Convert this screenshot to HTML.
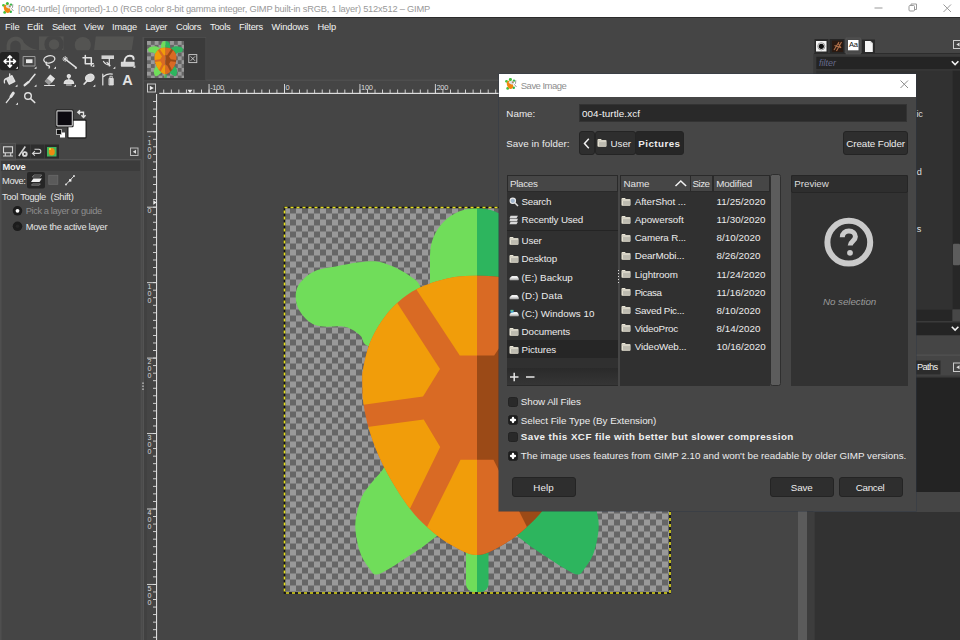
<!DOCTYPE html>
<html lang="en">
<head>
<meta charset="utf-8">
<title>GIMP - Save Image</title>
<style>
*{box-sizing:border-box;margin:0;padding:0}
html,body{width:960px;height:640px;overflow:hidden;background:#454545;}
body{position:relative;font-family:"Liberation Sans",sans-serif;font-size:11px;color:#e6e6e6;line-height:1}
.abs{position:absolute}
.t{position:absolute;white-space:nowrap;line-height:16px;height:16px}
/* title bar */
#titlebar{left:0;top:0;width:960px;height:17px;background:#fff}
#menubar{left:0;top:17px;width:960px;height:20px;background:#454545;border-top:1px solid #2b2b2b}
/* dialog */
.btn{position:absolute;background:#2e2e2e;border:1px solid #242424;border-radius:3px;color:#e8e8e8;text-align:center;white-space:nowrap}
.entry{position:absolute;background:#292929;border:1px solid #333}
.list{position:absolute;background:#303030}
.hdr{position:absolute;background:#464646;border:1px solid #2a2a2a;color:#e0e0e0}
.row{position:absolute;left:0;white-space:nowrap;height:18px;line-height:18px;color:#e6e6e6}
.chk{position:absolute;width:10px;height:10px;background:#292929;border:1px solid #232323;border-radius:2.500px}
</style>
</head>
<body>
<!-- TITLE BAR -->
<div id="titlebar" class="abs">
  <span class="t" style="left:18px;top:1px;font-size:9.3px;letter-spacing:-0.207px;color:#999;">&#91;004-turtle&#93; (imported)-1.0 (RGB color 8-bit gamma integer, GIMP built-in sRGB, 1 layer) 512x512 – GIMP</span>
  <svg class="abs" style="left:0;top:0" width="960" height="17" viewBox="0 0 960 17">
    <g transform="translate(2 2)"><g id="appicon"><circle cx="1.500" cy="3.300" r="1.400" fill="#4cc540"/><circle cx="5.400" cy="1.400" r="1.500" fill="#3dbb3a"/><circle cx="9" cy="2.600" r="1.200" fill="#3ab84a"/><circle cx="2.700" cy="10.400" r="1.400" fill="#43c23f"/><circle cx="8.700" cy="9.800" r="1.300" fill="#2fb24a"/><ellipse cx="5" cy="6.800" rx="2.900" ry="4.300" transform="rotate(-22 5 6.800)" fill="#f0860f"/><ellipse cx="6.400" cy="4.800" rx="2.700" ry="1.500" transform="rotate(15 6.400 4.800)" fill="#dfe3e8"/><circle cx="7.800" cy="4.300" r="1" fill="#a88a62"/><path d="M10.800 2.300l-.3 3.500M9.300 6.300l2.200 2.700" stroke="#9a9a9a" stroke-width="1" fill="none"/></g></g>
    <rect x="874.5" y="7.5" width="8" height="1" fill="#9a9a9a"/>
    <g fill="none" stroke="#9a9a9a" stroke-width="1"><rect x="909" y="5.5" width="5.5" height="5.5" rx="1"/><path d="M911 5.5v-1.5h5.5v5.5h-2"/></g>
    <path d="M943.5 4.5l7.5 7.5M951 4.5l-7.5 7.5" stroke="#9a9a9a" stroke-width="1" fill="none"/>
  </svg>
</div>
<!-- MENU BAR -->
<div id="menubar" class="abs">
  <span class="t" style="left:5px;top:0.5px;font-size:9.3px;letter-spacing:-0.121px;color:#f4f4f4;">File</span>
  <span class="t" style="left:27px;top:0.5px;font-size:9.3px;letter-spacing:-0.008px;color:#f4f4f4;">Edit</span>
  <span class="t" style="left:52px;top:0.5px;font-size:9.3px;letter-spacing:-0.391px;color:#f4f4f4;">Select</span>
  <span class="t" style="left:84px;top:0.5px;font-size:9.3px;letter-spacing:-0.121px;color:#f4f4f4;">View</span>
  <span class="t" style="left:112px;top:0.5px;font-size:9.3px;letter-spacing:-0.169px;color:#f4f4f4;">Image</span>
  <span class="t" style="left:145.5px;top:0.5px;font-size:9.3px;letter-spacing:-0.353px;color:#f4f4f4;">Layer</span>
  <span class="t" style="left:176px;top:0.5px;font-size:9.3px;letter-spacing:-0.312px;color:#f4f4f4;">Colors</span>
  <span class="t" style="left:210px;top:0.5px;font-size:9.3px;letter-spacing:-0.241px;color:#f4f4f4;">Tools</span>
  <span class="t" style="left:239px;top:0.5px;font-size:9.3px;letter-spacing:-0.188px;color:#f4f4f4;">Filters</span>
  <span class="t" style="left:271.5px;top:0.5px;font-size:9.3px;letter-spacing:-0.103px;color:#f4f4f4;">Windows</span>
  <span class="t" style="left:317.5px;top:0.5px;font-size:9.3px;letter-spacing:-0.156px;color:#f4f4f4;">Help</span>
</div>
<!-- TOOLBOX -->
<svg class="abs" style="left:0;top:0" width="146" height="640" viewBox="0 0 146 640">
<!-- wilber strip -->
<clipPath id="stripclip"><rect x="0" y="36.200" width="142" height="14.100"/></clipPath>
<g clip-path="url(#stripclip)">
<g fill="#545452">
<path d="M6.600 50.300V45.600A8.900 8.900 0 0 1 24 42.800C28 47 33 49.600 40 50.300H20.700V45.600A5.200 5.200 0 0 0 10.300 45.600V50.300Z"/>
<rect x="39" y="36.200" width="24.600" height="14.100"/>
<circle cx="82.800" cy="45.100" r="8.100"/>
<path d="M95.800 36.200H133.900L131.700 50.300H94Z"/>
</g>
<circle cx="54" cy="44.400" r="9.600" fill="#454545"/>
<circle cx="54" cy="44.400" r="5.200" fill="#545452"/>
</g>
<!-- selected tool bg -->
<rect x="0" y="52" width="19.200" height="18.200" rx="2.500" fill="#232323"/>
<g fill="none" stroke="#e2e2e2" stroke-width="1.300" stroke-linecap="round" stroke-linejoin="round">
<!-- move -->
<path d="M9.800 56v11M4.300 61.400h11M8 57.600l1.800-1.900 1.800 1.900M8 65.300l1.800 1.900 1.800-1.900M6 59.600l-1.900 1.800 1.900 1.800M13.600 59.600l1.900 1.800-1.900 1.800" stroke="#fff" stroke-width="1.500"/>
<!-- rect select -->
<rect x="23.500" y="56.500" width="11.500" height="9.500" stroke="#9a9a9a" stroke-width="1"/>
<rect x="26" y="59.300" width="6.500" height="3.800" fill="#e8e8e8" stroke="none"/>
<!-- lasso -->
<ellipse cx="49.300" cy="59.300" rx="5.600" ry="3.600" transform="rotate(-12 49.300 59.300)"/>
<path d="M46.500 62.300c-1 1.500 0 3 1.500 3.200s2 1.300 1 2.500"/>
<!-- wand -->
<path d="M66.500 60.200l9 7" stroke-width="1.500"/>
<path d="M65.200 56.500v5M62.800 59h4.800M63.500 57.300l3.400 3.400M66.900 57.300l-3.400 3.400" stroke-width="0.900"/>
<!-- crop -->
<path d="M85.300 55.500v8.300h8M83 57.800h8.300v8" stroke-width="1.500"/>
<!-- transform -->
<path d="M101.500 57.200h12.500" stroke-width="3.600" stroke-linecap="butt" stroke="#d2d2d2"/>
<path d="M109.300 58v8M103.500 61.500c2 3 4 3.500 5.800 3.500M107 62.500l3 3" stroke-width="1.200"/>
<!-- warp -->
<path d="M121.500 66v-3.500h12.500v3.500z" fill="#d8d8d8" stroke="#d8d8d8"/>
<path d="M124.500 62c0-4 2.500-6.300 5.300-6.300 2.400 0 3.800 1.500 3.800 3.200" stroke-width="2"/>
<!-- bucket -->
<path d="M6.500 78.500l5.500-2.800 2.800 5.700-5.500 2.800z" fill="#d8d8d8"/>
<path d="M9.700 73.800v5.500M6.500 78.500c-2 .5-2.500 2-2 4.300" />
<!-- brush -->
<path d="M35 74.300l-6.500 8" stroke-width="1.500"/><path d="M28.300 82.200l-3.600 3" stroke-width="2.400"/>
<!-- eraser -->
<path d="M50.300 75.300l4 3.400-2.800 3.400-4-3.400z" fill="#e0e0e0"/><path d="M47.200 79.200l3.600 3-1.800 2-3.600-3z" fill="#9a9a9a" stroke="#9a9a9a"/><path d="M44.500 85.500h10" stroke-width="1"/>
<!-- stamp -->
<path d="M68.800 77.600a1.500 1.500 0 1 1 .1 0v2.500M64.200 83.300c.3-2.600 2.500-3.300 4.700-3.300s4.400.7 4.700 3.300z" fill="#d8d8d8"/><path d="M66.500 85h4.800" stroke-width="1"/>
<!-- smudge -->
<ellipse cx="89.800" cy="77.800" rx="4.300" ry="3.500" fill="#d8d8d8" transform="rotate(-20 89.800 77.800)"/><path d="M88 80l-3.800 4" stroke-width="1.800"/>
<!-- paths -->
<path d="M102.800 85v-11M102.800 77c4-3.500 7-3.500 9.500-2.800" stroke-width="1.200"/><rect x="109.300" y="78.500" width="4" height="6.500" fill="#d8d8d8" stroke-width="0.800"/><path d="M110.300 76.300h2v2h-2z" stroke-width="0.800"/>
<!-- picker -->
<path d="M6.300 102.600l5-6.500" stroke-width="1.300"/><path d="M11 96.500l2.300-3.300" stroke-width="3"/>
<!-- zoom -->
<circle cx="28" cy="96" r="3.300" stroke-width="1.400"/><path d="M30.500 98.500l4.200 4" stroke-width="1.700"/>
</g>
<!-- text tool A drawn as real text -->
<text x="127.600" y="85.200" text-anchor="middle" font-family="Liberation Sans, sans-serif" font-size="14.500" font-weight="bold" fill="#e2e2e2">A</text>
<!-- group corner marks -->
<g fill="#eee"><path d="M18 66.500v2.300h-2.300zM36.500 66.500v2.300h-2.300zM56 66.500v2.300h-2.300zM76.800 66.500v2.300h-2.300zM94.300 64.500v2.300h-2.300zM115.300 66.500v2.300h-2.300zM135.300 65.500v2.300h-2.300zM17.500 84.500v2.300h-2.300zM36.500 84.500v2.300h-2.300zM76 84.500v2.300h-2.300zM95.300 84.500v2.300h-2.300zM18 102.500v2.300h-2.300z"/></g>
<!-- fg/bg -->
<rect x="67.800" y="120" width="18.400" height="18" rx="1.200" fill="#fff" stroke="#232323" stroke-width="1.400"/>
<rect x="55.600" y="109.600" width="18" height="17.600" rx="1.300" fill="#1a1a1a"/><rect x="56.900" y="110.900" width="15.400" height="15" rx="0.800" fill="#0c0a10" stroke="#cfcfcf" stroke-width="1.100"/>
<path d="M78 112.300h5.500v5M80 110.300l-2.200 2 2.200 2M81.400 115.300l2.100 2.200 2.100-2.200" fill="none" stroke="#e2e2e2" stroke-width="1.400"/>
<rect x="60" y="132.500" width="5" height="5" fill="#fff"/><rect x="56.500" y="129.500" width="5" height="5" fill="#111" stroke="#ccc" stroke-width="0.800"/>
<!-- tabs -->
<rect x="0.800" y="143.300" width="14.700" height="17" fill="#484848" stroke="#585858" stroke-width="0.800"/><rect x="0.400" y="159" width="0.900" height="481" fill="#565656"/>
<rect x="16" y="144.500" width="14" height="14" fill="#2e2e2e"/><rect x="30.500" y="144.500" width="13.500" height="14" fill="#2e2e2e"/><rect x="44.500" y="144.500" width="14.500" height="14" fill="#2a2a2a"/>
<g fill="none" stroke="#d4d4d4" stroke-width="1.100">
<rect x="3.500" y="146.800" width="9" height="6"/><path d="M5.300 153v2.500M10.700 153v2.500M3 156h10"/>
<path d="M18.800 156l6.500-9.500" stroke-width="1.500"/><circle cx="24.800" cy="154" r="2.300" fill="#ddd"/><circle cx="24.800" cy="154" r="0.900" fill="#222" stroke="none"/>
<path d="M34.500 149.300h4.300a2.050 2.050 0 0 1 0 4.100h-6M34.900 151.200l-2.400 2.200 2.400 2.200"/>
</g>
<rect x="47" y="147" width="9.500" height="9.500" fill="#43b65a"/><ellipse cx="51.800" cy="151.800" rx="3" ry="3.800" fill="#ee8b12"/><rect x="49" y="148" width="2" height="2" fill="#e3d537"/>
<rect x="130.500" y="148" width="7.500" height="7.500" fill="none" stroke="#bbb" stroke-width="1"/><path d="M136 149.800v4l-3.200-2z" fill="#ddd"/>
<rect x="0" y="159.300" width="141" height="0.800" fill="#5a5a5a"/>
<rect x="1" y="160.800" width="139" height="10.200" fill="#3c3c3c"/>
<!-- move options -->
<rect x="27" y="172" width="18" height="16.500" rx="2" fill="#262626"/>
<path d="M32.300 177l1.700-2h7.700l-1.700 2z" fill="none" stroke="#8a8a8a" stroke-width="0.800"/><path d="M31 182l2.300-3.600h8.500l-2.300 3.600z" fill="#f0f0f0"/><path d="M31.500 185.200l1-1.300h7.800l-1 1.300z" fill="none" stroke="#8a8a8a" stroke-width="0.800"/>
<rect x="48.800" y="175.300" width="9" height="9" fill="#5a5a5a" stroke="#6a6a6a" stroke-width="0.800"/>
<path d="M66 184.500l8-8.500" stroke="#ddd" stroke-width="1" fill="none"/><rect x="69" y="179.200" width="2.400" height="2.400" fill="#eee"/><circle cx="74" cy="176" r="1" fill="#ddd"/><circle cx="66" cy="184.500" r="1" fill="#ddd"/>
<!-- radios -->
<circle cx="17.500" cy="210.800" r="4.800" fill="#1c1c1c"/><circle cx="17.500" cy="210.800" r="1.900" fill="#fff"/>
<circle cx="17.500" cy="226.300" r="4.800" fill="#1c1c1c"/><circle cx="17.500" cy="226.300" r="1.800" fill="#262626"/>
</svg>
<div class="abs" style="left:0;top:0;width:142px;height:300px">
<span class="t" style="left:2.5px;top:158.8px;font-size:9.3px;letter-spacing:-0.191px;font-weight:bold;color:#f2f2f2;">Move</span>
<span class="t" style="left:2px;top:172.5px;font-size:9.3px;letter-spacing:-0.366px;color:#e8e8e8;">Move:</span>
<span class="t" style="left:2px;top:188.5px;font-size:9.3px;letter-spacing:-0.266px;color:#e8e8e8;">Tool Toggle&nbsp; (Shift)</span>
<span class="t" style="left:25.7px;top:203.2px;font-size:9.3px;letter-spacing:-0.392px;color:#8e8e8e;">Pick a layer or guide</span>
<span class="t" style="left:25.7px;top:218.8px;font-size:9.3px;letter-spacing:-0.303px;color:#e6e6e6;">Move the active layer</span>
</div>
<!-- CANVAS AREA -->
<svg class="abs" style="left:0;top:0" width="960" height="640" viewBox="0 0 960 640">
<defs>
<pattern id="chk" x="284" y="207.5" width="12" height="12" patternUnits="userSpaceOnUse"><rect width="12" height="12" fill="#999"/><rect x="6" width="6" height="6" fill="#666"/><rect y="6" width="6" height="6" fill="#666"/></pattern>
<pattern id="hticks" x="284" y="82" width="7.545" height="12" patternUnits="userSpaceOnUse"><rect x="0" y="7.500" width="0.9" height="4.500" fill="#ddd"/></pattern>
<pattern id="hmaj" x="284" y="82" width="75.450" height="12" patternUnits="userSpaceOnUse"><rect x="0" y="2" width="0.9" height="10" fill="#ddd"/></pattern>
<pattern id="vticks" x="147" y="206.700" width="10" height="7.545" patternUnits="userSpaceOnUse"><rect x="6" y="0" width="4" height="0.9" fill="#ddd"/></pattern>
<pattern id="vmaj" x="147" y="206.700" width="10" height="75.450" patternUnits="userSpaceOnUse"><rect x="0" y="0" width="10" height="0.9" fill="#ddd"/></pattern>
<pattern id="chk2" width="80" height="80" patternUnits="userSpaceOnUse"><rect width="80" height="80" fill="#999"/><rect x="40" width="40" height="40" fill="#666"/><rect y="40" width="40" height="40" fill="#666"/></pattern>
<g id="turtle">
<path d="M136.1,79.5 C132.6,72.1 129.3,71.5 124.7,68.1 C120.1,64.7 114.0,61.4 108.6,59.0 C103.2,56.6 98.2,54.6 92.5,53.9 C86.8,53.2 81.1,54.0 74.2,54.8 C67.3,55.7 58.2,57.7 51.3,59.0 C44.4,60.3 38.0,60.8 33.0,62.5 C28.0,64.2 24.8,66.6 21.5,69.3 C18.2,72.0 15.2,75.3 13.5,78.5 C11.8,81.7 11.2,85.1 11.2,88.7 C11.2,92.3 11.8,96.4 13.5,100.2 C15.2,104.0 18.6,108.6 21.5,111.5 C24.4,114.4 27.2,116.2 30.7,117.5 C34.1,118.8 37.6,118.9 42.2,119.2 C46.8,119.4 54.0,118.5 58.2,119.0 C62.4,119.5 64.3,120.4 67.4,122.0 C70.4,123.6 73.8,126.1 76.5,128.8 C79.2,131.6 77.0,136.2 83.5,138.5 C90.0,140.8 105.2,146.8 115.5,142.5 C125.8,138.2 142.1,123.0 145.5,112.5 C148.9,102.0 139.6,86.9 136.1,79.5Z" fill="#70dd5a"/>
<path d="M248.9,79.5 C252.4,72.1 255.7,71.5 260.3,68.1 C264.9,64.7 271.0,61.4 276.4,59.0 C281.8,56.6 286.8,54.6 292.5,53.9 C298.2,53.2 303.9,54.0 310.8,54.8 C317.7,55.7 326.8,57.7 333.7,59.0 C340.6,60.3 347.0,60.8 352.0,62.5 C357.0,64.2 360.2,66.6 363.5,69.3 C366.8,72.0 369.8,75.3 371.5,78.5 C373.2,81.7 373.8,85.1 373.8,88.7 C373.8,92.3 373.2,96.4 371.5,100.2 C369.8,104.0 366.4,108.6 363.5,111.5 C360.6,114.4 357.7,116.2 354.3,117.5 C350.8,118.8 347.4,118.9 342.8,119.2 C338.2,119.4 331.0,118.5 326.8,119.0 C322.6,119.5 320.7,120.4 317.6,122.0 C314.6,123.6 311.2,126.1 308.5,128.8 C305.8,131.6 308.0,136.2 301.5,138.5 C295.0,140.8 279.8,146.8 269.5,142.5 C259.2,138.2 242.9,123.0 239.5,112.5 C236.1,102.0 245.4,86.9 248.9,79.5Z" fill="#2db55e"/>
<path d="M115.5,244.5 C104.8,241.5 101.7,258.8 96.5,264.5 C91.3,270.2 87.8,274.0 84.5,278.5 C81.2,283.0 78.8,285.1 76.5,291.5 C74.2,297.9 71.0,308.1 70.8,316.9 C70.6,325.7 73.1,337.1 75.5,344.5 C77.9,351.9 82.5,357.7 85.2,361.5 C87.9,365.3 88.8,366.9 91.5,367.1 C94.2,367.4 97.8,364.9 101.5,363.0 C105.2,361.1 108.4,359.0 113.8,355.5 C119.3,352.0 127.9,346.5 134.2,342.1 C140.5,337.7 146.1,333.2 151.7,328.9 C157.2,324.6 166.0,324.2 167.5,316.5 C169.0,308.8 169.2,294.5 160.5,282.5 C151.8,270.5 126.2,247.5 115.5,244.5Z" fill="#70dd5a"/>
<path d="M269.5,244.5 C280.2,241.5 283.3,258.8 288.5,264.5 C293.7,270.2 297.2,274.0 300.5,278.5 C303.8,283.0 306.2,285.1 308.5,291.5 C310.8,297.9 314.0,308.1 314.2,316.9 C314.4,325.7 311.9,337.1 309.5,344.5 C307.1,351.9 302.5,357.7 299.8,361.5 C297.1,365.3 296.2,366.9 293.5,367.1 C290.8,367.4 287.2,364.9 283.5,363.0 C279.8,361.1 276.7,359.0 271.2,355.5 C265.8,352.0 257.1,346.5 250.8,342.1 C244.5,337.7 238.8,333.2 233.3,328.9 C227.7,324.6 219.0,324.2 217.5,316.5 C216.0,308.8 215.8,294.5 224.5,282.5 C233.2,270.5 258.8,247.5 269.5,244.5Z" fill="#2db55e"/>
<path d="M145.5,132.5 V47.5 A47,47 0 0 1 192.5,0.5 V132.5Z" fill="#70dd5a"/>
<path d="M239.5,132.5 V47.5 A47,47 0 0 0 192.5,0.5 V132.5Z" fill="#2db55e"/>
<path d="M181.5,332.5 V376.5 a8,8 0 0 0 8,8 H192.5 V332.5Z" fill="#70dd5a"/>
<path d="M204.0,332.5 V376.5 a8,8 0 0 1 -8,8 H192.5 V332.5Z" fill="#2db55e"/>
<clipPath id="shellclip"><path d="M192.5,68.0 C182.6,68.0 172.6,68.8 162.8,71.0 C153.0,73.2 141.8,77.0 133.5,81.0 C125.2,85.0 119.3,89.5 113.2,95.0 C107.1,100.5 101.8,106.9 97.1,113.8 C92.4,120.7 88.1,128.4 85.0,136.5 C81.9,144.6 79.7,155.7 78.5,162.5 C77.3,169.3 77.9,171.8 78.0,177.5 C78.1,183.2 77.8,188.7 79.0,196.5 C80.2,204.3 81.9,213.8 85.2,224.1 C88.5,234.4 92.7,246.2 99.0,258.5 C105.3,270.8 115.5,287.7 123.0,298.0 C130.4,308.3 136.2,313.7 143.7,320.4 C151.2,327.1 159.7,333.5 167.8,338.0 C175.9,342.5 184.3,347.5 192.5,347.5 C200.7,347.5 209.1,342.5 217.2,338.0 C225.3,333.5 233.8,327.1 241.3,320.4 C248.8,313.7 254.5,308.3 262.0,298.0 C269.4,287.7 279.7,270.8 286.0,258.5 C292.3,246.2 296.5,234.4 299.8,224.1 C303.1,213.8 304.8,204.3 306.0,196.5 C307.2,188.7 306.9,183.2 307.0,177.5 C307.1,171.8 307.7,169.3 306.5,162.5 C305.3,155.7 303.1,144.6 300.0,136.5 C296.9,128.4 292.6,120.7 287.9,113.8 C283.2,106.9 277.9,100.5 271.8,95.0 C265.7,89.5 259.8,85.0 251.5,81.0 C243.2,77.0 232.0,73.2 222.2,71.0 C212.4,68.8 202.4,68.0 192.5,68.0Z"/></clipPath>
<g clip-path="url(#shellclip)">
<rect x="0" y="0" width="192.5" height="384" fill="#d96a24"/>
<rect x="192.5" y="0" width="200" height="384" fill="#9b4a17"/>
<g fill="#f19d0a">
<polygon points="105.5,87.5 112.9,95.8 155.5,161.5 138.5,189.0 79.0,197.3 55.5,196.5 55.5,87.5"/><polygon points="82.8,219.5 139.2,212.0 155.7,239.5 125.8,300.5 95.5,312.5 55.5,312.5 55.5,219.5"/><polygon points="176.0,252.3 192.5,252.3 192.5,362.5 130.5,362.5 143.0,318.5"/><polygon points="132.2,82.5 132.2,62.5 192.5,62.5 192.5,148.0 175.3,148.0"/>
</g>
<g fill="#d96a24">
<polygon points="279.5,87.5 272.1,95.8 229.5,161.5 246.5,189.0 306.0,197.3 329.5,196.5 329.5,87.5"/><polygon points="302.2,219.5 245.8,212.0 229.3,239.5 259.2,300.5 289.5,312.5 329.5,312.5 329.5,219.5"/><polygon points="209.0,252.3 192.5,252.3 192.5,362.5 254.5,362.5 242.0,318.5"/><polygon points="252.8,82.5 252.8,62.5 192.5,62.5 192.5,148.0 209.7,148.0"/>
</g>
</g>
</g>
</defs>
<!-- image tab -->
<rect x="144" y="38" width="62" height="43" fill="#3b3b3b"/>
<rect x="206" y="79.500" width="608" height="1.500" fill="#4e4e4e"/>
<rect x="142.600" y="37" width="1.300" height="603" fill="#555"/><rect x="144" y="82" width="3" height="558" fill="#414141"/><rect x="140.800" y="159.300" width="0.900" height="481" fill="#555"/>
<rect x="188.800" y="54.600" width="8" height="8" fill="none" stroke="#cfcfcf" stroke-width="0.900"/><path d="M190.600 56.400l4.400 4.400M195 56.400l-4.400 4.400" stroke="#cfcfcf" stroke-width="0.900" fill="none"/>
<rect x="143.800" y="37.500" width="62" height="43" fill="none" stroke="#4e4e4e" stroke-width="0.800"/>
<g fill="#c8c8c8"><rect x="142.300" y="382.500" width="1.400" height="1.400"/><rect x="142.300" y="385.500" width="1.400" height="1.400"/><rect x="142.300" y="388.500" width="1.400" height="1.400"/></g>
<!-- rulers -->
<rect x="159.300" y="82" width="640" height="12" fill="url(#hticks)"/>
<rect x="158" y="82" width="640" height="12" fill="url(#hmaj)"/>
<rect x="159.300" y="92.800" width="640" height="1.200" fill="#ddd"/>
<rect x="147" y="95" width="10" height="545" fill="url(#vticks)"/>
<rect x="147" y="95" width="10" height="545" fill="url(#vmaj)"/>
<rect x="156" y="94" width="1.100" height="546" fill="#ddd"/>
<g font-family="Liberation Sans, sans-serif" font-size="7.5" fill="#dcdcdc" letter-spacing="-0.35"><text x="210.2" y="90.3">-100</text><text x="285.6" y="90.3">0</text><text x="361.1" y="90.3">100</text><text x="436.5" y="90.3">200</text><text text-anchor="middle" font-size="7" letter-spacing="0"><tspan x="149.4" y="137.6">-</tspan><tspan x="149.4" y="144.6">1</tspan><tspan x="149.4" y="151.6">0</tspan><tspan x="149.4" y="158.6">0</tspan></text><text text-anchor="middle" font-size="7" letter-spacing="0"><tspan x="149.4" y="213.4">0</tspan></text><text text-anchor="middle" font-size="7" letter-spacing="0"><tspan x="149.4" y="288.8">1</tspan><tspan x="149.4" y="295.8">0</tspan><tspan x="149.4" y="302.8">0</tspan></text><text text-anchor="middle" font-size="7" letter-spacing="0"><tspan x="149.4" y="364.3">2</tspan><tspan x="149.4" y="371.3">0</tspan><tspan x="149.4" y="378.3">0</tspan></text><text text-anchor="middle" font-size="7" letter-spacing="0"><tspan x="149.4" y="439.8">3</tspan><tspan x="149.4" y="446.8">0</tspan><tspan x="149.4" y="453.8">0</tspan></text><text text-anchor="middle" font-size="7" letter-spacing="0"><tspan x="149.4" y="515.2">4</tspan><tspan x="149.4" y="522.2">0</tspan><tspan x="149.4" y="529.2">0</tspan></text><text text-anchor="middle" font-size="7" letter-spacing="0"><tspan x="149.4" y="590.7">5</tspan><tspan x="149.4" y="597.7">0</tspan><tspan x="149.4" y="604.7">0</tspan></text></g><rect x="147.5" y="84" width="8" height="8" fill="none" stroke="#c8c8c8" stroke-width="1"/><path d="M149.8 85.800v4.500l4-2.250z" fill="#eee"/><path d="M187.500 89.800h5l-2.500 3.200z" fill="#eee"/><path d="M153.300 200.200l3.300 2.300-3.300 2.300z" fill="#eee"/>
<!-- canvas image -->
<rect x="284.5" y="207.5" width="385" height="385" fill="url(#chk)"/>
<svg x="284.5" y="207.5" width="385" height="385" viewBox="0 0 385 385"><use href="#turtle"/></svg>
<rect x="284.5" y="207.5" width="385.5" height="385.5" fill="none" stroke="#111" stroke-width="1.6"/>
<rect x="284.5" y="207.5" width="385.5" height="385.5" fill="none" stroke="#e6e01e" stroke-width="1.6" stroke-dasharray="3 3"/>
<!-- thumbnail -->
<svg x="147" y="41" width="37" height="37" viewBox="0 0 385 385"><rect width="385" height="385" fill="url(#chk2)"/><use href="#turtle"/></svg>
<!-- scrollbar -->
<rect x="798" y="82" width="9" height="558" fill="#5b5b5b"/>
</svg>
<!-- RIGHT DOCK -->
<svg class="abs" style="left:806px;top:37px" width="154" height="603" viewBox="806 37 154 603">
<rect x="807" y="82" width="7.500" height="558" fill="#3d3d3d"/>
<rect x="813.300" y="53.500" width="146.700" height="457" fill="#3a3a3a"/>
<rect x="814" y="53" width="146" height="1" fill="#2c2c2c"/>
<!-- tabs -->
<rect x="814.500" y="39" width="14" height="14.500" fill="#2a2a2a"/><rect x="829.500" y="39" width="15" height="14.500" fill="#262626"/><rect x="862" y="39.500" width="13" height="14" fill="#2a2a2a"/>
<rect x="846" y="38" width="14.500" height="16" fill="#4a4a4a" stroke="#595959" stroke-width="0.600"/>
<rect x="816" y="41" width="10.500" height="10.500" fill="#f4f4f4"/><circle cx="821.300" cy="46.300" r="2.600" fill="#111"/><circle cx="821.300" cy="46.300" r="3.600" fill="none" stroke="#999" stroke-width="1"/>
<rect x="832" y="40.500" width="11" height="11.500" fill="#2a1a12"/><path d="M834 50l5-8M836.500 51l5-9M834.500 45.500l6 2M838 43l3 5" stroke="#b0704a" stroke-width="1.100" fill="none"/>
<rect x="848" y="40" width="10.500" height="10.300" fill="#fff"/>
<path d="M865 41h5.500l2.300 2.300v8.700h-7.800z" fill="#f6f6f6"/><path d="M870.500 41v2.300h2.300" fill="#ccc"/>
<rect x="953.500" y="40.500" width="8" height="8" fill="none" stroke="#ccc" stroke-width="1"/><path d="M959.500 42.500v4l-3.200-2z" fill="#ddd"/>
<!-- filter entry -->
<rect x="816.300" y="56.800" width="144" height="12.400" fill="#242424"/>
<path d="M951.800 61.300l3.300 3.300 3.300-3.300" fill="none" stroke="#f2f2f2" stroke-width="1.600"/>
<!-- font list -->
<rect x="816.300" y="70.500" width="136.200" height="239" fill="#313131"/>
<rect x="952.500" y="70.500" width="7.500" height="239" fill="#272727"/>
<rect x="953" y="243.800" width="7" height="21.500" rx="1" fill="#5c5c5c"/>
<rect x="816.300" y="309.500" width="136.200" height="11.500" fill="#262626"/><rect x="952.500" y="309.500" width="7.500" height="11.500" fill="#474747"/>
<rect x="816.300" y="322.500" width="144" height="12.800" fill="#242424"/>
<path d="M951.800 326.800l3.300 3.300 3.300-3.300" fill="none" stroke="#f2f2f2" stroke-width="1.600"/>
<rect x="813.300" y="335.500" width="146.700" height="24.500" fill="#454545"/>
<rect x="814" y="354.500" width="146" height="1.200" fill="#535353"/>
<!-- lower dock -->
<rect x="813.300" y="360" width="146.700" height="17.500" fill="#454545"/>
<rect x="916" y="360.500" width="24.500" height="14" fill="#2c2c2c"/>
<rect x="953.500" y="363" width="8" height="8.500" fill="none" stroke="#ccc" stroke-width="1"/><path d="M959.500 365.300v4l-3.200-2z" fill="#ddd"/>
<rect x="814" y="375.500" width="146" height="2" fill="#3a3a3a"/>
<rect x="816" y="377.500" width="144" height="115" fill="#232323"/>
<rect x="813.300" y="492" width="146.700" height="20" fill="#454545"/>
<rect x="814.500" y="512" width="145.500" height="128" fill="#323232"/>
</svg>
<div class="abs" style="left:0;top:0;width:960px;height:0">
<span class="t" style="left:819px;top:55.3px;font-size:9px;letter-spacing:-0.003px;font-style:italic;color:#666a8c;">filter</span>
<span class="t" style="left:849px;top:37px;font-size:7.5px;letter-spacing:-0.344px;color:#111;">Aa</span>
<span class="t" style="left:917px;top:359.3px;font-size:9.3px;letter-spacing:-0.656px;color:#f2f2f2;">Paths</span>
<span class="t" style="left:916.5px;top:106.4px;font-size:9.2px;letter-spacing:-0.320px;color:#ddd;">ic</span>
<span class="t" style="left:916.8px;top:164px;font-size:9.2px;letter-spacing:0.075px;color:#ddd;">d</span>
<span class="t" style="left:916.8px;top:221.4px;font-size:9.2px;letter-spacing:0.006px;color:#ddd;">s</span>
</div>
<!-- DIALOG -->
<div id="dlgshadow" class="abs" style="left:499px;top:74px;width:417px;height:436.500px;box-shadow:0 0 0 0.600px rgba(45,55,70,0.700)"></div>
<div id="dlg" class="abs" style="left:0;top:0;width:960px;height:0;background:none">
<div class="abs" style="left:499px;top:74px;width:417px;height:436.500px;background:#464646"></div>
<div class="abs" style="left:499px;top:74px;width:417px;height:22.700px;background:#fff"></div>
<svg class="abs" style="left:504.800px;top:78.200px" width="13" height="13" viewBox="0 0 13 13"><use href="#appicon"/></svg>
<span class="t" style="left:520.8px;top:77.5px;font-size:9.5px;letter-spacing:-0.520px;color:#8e8e8e;">Save Image</span>
<svg class="abs" style="left:899px;top:79px" width="11" height="11" viewBox="0 0 11 11"><path d="M1.500 1.500l7.500 7.500M9 1.500l-7.500 7.500" stroke="#8c8c8c" stroke-width="1" fill="none"/></svg>
<span class="t" style="left:506.3px;top:105.8px;font-size:9.8px;letter-spacing:0.028px;color:#ececec;">Name:</span>
<div class="entry" style="left:578.800px;top:104px;width:328.700px;height:17.500px"></div>
<span class="t" style="left:582px;top:105.5px;font-size:9.8px;letter-spacing:0.097px;color:#f4f4f4;">004-turtle.xcf</span>
<span class="t" style="left:506.3px;top:135.8px;font-size:9.8px;letter-spacing:0.037px;color:#ececec;">Save in folder:</span>
<div class="btn" style="left:579px;top:131.300px;width:16px;height:24.200px"></div>
<svg class="abs" style="left:582px;top:137px" width="10" height="13" viewBox="0 0 10 13"><path d="M6.800 1.800l-4.300 4.700 4.300 4.700" fill="none" stroke="#f2f2f2" stroke-width="1.500"/></svg>
<div class="btn" style="left:594.500px;top:131.300px;width:41px;height:24.200px"></div>
<svg class="abs" style="left:597px;top:138.3px" width="10" height="9" viewBox="0 0 11 10"><path d="M.5 2.200c0-.8.400-1.200 1.200-1.200h2.600l1 1.300h4.200c.7 0 1 .3 1 1v5.500c0 .5-.3.800-.8.800h-8.400c-.5 0-.8-.3-.8-.8z" fill="#ece8d8"/><path d="M2 4.500h8v4.300h-8z" fill="#bdbbb0"/><path d="M.5 3.300h10" stroke="#8a8a86" stroke-width=".5"/></svg>
<span class="t" style="left:610.5px;top:135.8px;font-size:9.8px;letter-spacing:-0.047px;color:#ececec;">User</span>
<div class="btn" style="left:635px;top:131.300px;width:49px;height:24.200px;background:#262626"></div>
<span class="t" style="left:638.3px;top:135.8px;font-size:9.8px;letter-spacing:0.441px;font-weight:bold;color:#ececec;">Pictures</span>
<div class="btn" style="left:843px;top:131.300px;width:64.500px;height:24.200px"></div>
<span class="t" style="left:846.3px;top:135.8px;font-size:9.8px;letter-spacing:-0.093px;color:#ececec;">Create Folder</span>
<!-- places -->
<div class="list" style="left:506.600px;top:174.500px;width:111.400px;height:211px"></div>
<div class="hdr" style="left:506.600px;top:174.500px;width:111.400px;height:17.500px"></div>
<span class="t" style="left:510px;top:175.8px;font-size:9.8px;letter-spacing:-0.318px;color:#e4e4e4;">Places</span>
<div class="abs" style="left:507px;top:230px;width:111px;height:1px;background:#242424"></div>
<div class="abs" style="left:506.600px;top:340.400px;width:111.400px;height:18px;background:#262626"></div>
<div class="abs" style="left:506.600px;top:368px;width:111.400px;height:17.500px;background:linear-gradient(#2a2a2a,#363636)"></div>
<div class="abs" style="left:506.600px;top:385px;width:111.400px;height:1px;background:#2a2a2a"></div>
<svg class="abs" style="left:509px;top:372px" width="28" height="10" viewBox="0 0 28 10"><path d="M1 5h8.500M5.200 .8v8.500M17 5h8.500" stroke="#e6e6e6" stroke-width="1.500" fill="none"/></svg>
<svg class="abs" style="left:509px;top:196.5px" width="10" height="10" viewBox="0 0 10 10"><circle cx="3.800" cy="3.800" r="2.700" fill="#9fb4cc" stroke="#e8e8e8" stroke-width="1.100"/><path d="M5.800 5.800l3.200 3.200" stroke="#ddd" stroke-width="1.500"/></svg><span class="t" style="left:521.6px;top:194px;font-size:9.8px;letter-spacing:-0.258px;color:#ececec;">Search</span>
<svg class="abs" style="left:509px;top:215px" width="10" height="10" viewBox="0 0 10 10"><path d="M1.500.8h7.500l-1.500 2.400h-7zM1 3.800h8l-1 2.400h-7.500zM1.500 6.800h7.500l-1.500 2.400h-7z" fill="#d9d9d9"/></svg><span class="t" style="left:521.6px;top:212px;font-size:9.8px;letter-spacing:-0.171px;color:#ececec;">Recently Used</span>
<svg class="abs" style="left:509px;top:235.8px" width="10" height="9" viewBox="0 0 11 10"><path d="M.5 2.200c0-.8.400-1.200 1.200-1.200h2.600l1 1.300h4.200c.7 0 1 .3 1 1v5.500c0 .5-.3.800-.8.800h-8.400c-.5 0-.8-.3-.8-.8z" fill="#ece8d8"/><path d="M2 4.500h8v4.300h-8z" fill="#bdbbb0"/><path d="M.5 3.300h10" stroke="#8a8a86" stroke-width=".5"/></svg><span class="t" style="left:521.6px;top:233.3px;font-size:9.8px;letter-spacing:-0.172px;color:#ececec;">User</span>
<svg class="abs" style="left:509px;top:253.8px" width="10" height="9" viewBox="0 0 11 10"><path d="M.5 2.200c0-.8.400-1.200 1.200-1.200h2.600l1 1.300h4.200c.7 0 1 .3 1 1v5.500c0 .5-.3.800-.8.800h-8.400c-.5 0-.8-.3-.8-.8z" fill="#ece8d8"/><path d="M2 4.500h8v4.300h-8z" fill="#bdbbb0"/><path d="M.5 3.300h10" stroke="#8a8a86" stroke-width=".5"/></svg><span class="t" style="left:521.6px;top:251.3px;font-size:9.8px;letter-spacing:-0.065px;color:#ececec;">Desktop</span>
<svg class="abs" style="left:509px;top:273px" width="10" height="9" viewBox="0 0 11 10"><path d="M.8 5.600l2.400-2.400h5.800l1.500 2.400v2h-9.700z" fill="#f0f0f0"/><path d="M.8 6h9.700v2h-9.700z" fill="#b5b5b5"/></svg><span class="t" style="left:521.6px;top:269.5px;font-size:9.8px;letter-spacing:0.001px;color:#ececec;">(E:) Backup</span>
<svg class="abs" style="left:509px;top:291.5px" width="10" height="9" viewBox="0 0 11 10"><path d="M.8 5.600l2.400-2.400h5.800l1.500 2.400v2h-9.700z" fill="#f0f0f0"/><path d="M.8 6h9.700v2h-9.700z" fill="#b5b5b5"/></svg><span class="t" style="left:521.6px;top:288px;font-size:9.8px;letter-spacing:0.139px;color:#ececec;">(D:) Data</span>
<svg class="abs" style="left:509px;top:309.3px" width="10" height="9" viewBox="0 0 11 10"><path d="M.8 5.600l2.400-2.400h5.800l1.500 2.400v2h-9.700z" fill="#f0f0f0"/><path d="M.8 6h9.700v2h-9.700z" fill="#b5b5b5"/><rect x="1.500" y="1" width="3.500" height="3" fill="#3fa9e0"/><rect x="2.500" y="1" width="1.500" height="1.500" fill="#8bd34b"/></svg><span class="t" style="left:521.6px;top:305.8px;font-size:9.8px;letter-spacing:0.026px;color:#ececec;">(C:) Windows 10</span>
<svg class="abs" style="left:509px;top:326.5px" width="10" height="9" viewBox="0 0 11 10"><path d="M.5 2.200c0-.8.400-1.200 1.200-1.200h2.600l1 1.300h4.200c.7 0 1 .3 1 1v5.500c0 .5-.3.800-.8.800h-8.400c-.5 0-.8-.3-.8-.8z" fill="#ece8d8"/><path d="M2 4.500h8v4.300h-8z" fill="#bdbbb0"/><path d="M.5 3.300h10" stroke="#8a8a86" stroke-width=".5"/></svg><span class="t" style="left:521.6px;top:324px;font-size:9.8px;letter-spacing:-0.118px;color:#ececec;">Documents</span>
<svg class="abs" style="left:509px;top:344.5px" width="10" height="9" viewBox="0 0 11 10"><path d="M.5 2.200c0-.8.400-1.200 1.200-1.200h2.600l1 1.300h4.200c.7 0 1 .3 1 1v5.500c0 .5-.3.800-.8.800h-8.400c-.5 0-.8-.3-.8-.8z" fill="#ece8d8"/><path d="M2 4.500h8v4.300h-8z" fill="#bdbbb0"/><path d="M.5 3.300h10" stroke="#8a8a86" stroke-width=".5"/></svg><span class="t" style="left:521.6px;top:342px;font-size:9.8px;letter-spacing:-0.111px;color:#ececec;">Pictures</span>

<!-- files -->
<div class="list" style="left:620.300px;top:174.500px;width:149.500px;height:211px"></div>
<div class="hdr" style="left:620.300px;top:174.500px;width:70.500px;height:17.500px"></div>
<div class="hdr" style="left:690.300px;top:174.500px;width:23px;height:17.500px"></div>
<div class="hdr" style="left:712.800px;top:174.500px;width:57px;height:17.500px"></div>
<span class="t" style="left:623.5px;top:175.8px;font-size:9.8px;letter-spacing:-0.035px;color:#e4e4e4;">Name</span>
<span class="t" style="left:692.5px;top:175.8px;font-size:9.8px;letter-spacing:-0.516px;color:#e4e4e4;">Size</span>
<span class="t" style="left:716.3px;top:175.8px;font-size:9.8px;letter-spacing:-0.166px;color:#e4e4e4;">Modified</span>
<svg class="abs" style="left:674px;top:179px" width="14" height="9" viewBox="0 0 14 9"><path d="M1.500 7l5.300-5 5.300 5" fill="none" stroke="#f2f2f2" stroke-width="1.500"/></svg>
<div class="abs" style="left:769.800px;top:173.800px;width:11px;height:212px;background:#5c5c5c;border-radius:2.500px;border:1.400px solid #2f2f2f"></div>
<div class="abs" style="left:618.200px;top:270px;width:1.200px;height:13px;background:repeating-linear-gradient(#ddd 0 1.500px,transparent 1.500px 3px)"></div>
<svg class="abs" style="left:621.3px;top:196.5px" width="10" height="9" viewBox="0 0 11 10"><path d="M.5 2.200c0-.8.400-1.200 1.200-1.200h2.600l1 1.300h4.200c.7 0 1 .3 1 1v5.500c0 .5-.3.800-.8.800h-8.400c-.5 0-.8-.3-.8-.8z" fill="#ece8d8"/><path d="M2 4.500h8v4.300h-8z" fill="#bdbbb0"/><path d="M.5 3.300h10" stroke="#8a8a86" stroke-width=".5"/></svg><span class="t" style="left:634.7px;top:194px;font-size:9.8px;letter-spacing:-0.041px;color:#ececec;">AfterShot ...</span><span class="t" style="left:716.5px;top:194px;font-size:9.8px;letter-spacing:0.079px;color:#ececec;">11/25/2020</span>
<svg class="abs" style="left:621.3px;top:214.5px" width="10" height="9" viewBox="0 0 11 10"><path d="M.5 2.200c0-.8.400-1.200 1.200-1.200h2.600l1 1.300h4.200c.7 0 1 .3 1 1v5.500c0 .5-.3.800-.8.800h-8.400c-.5 0-.8-.3-.8-.8z" fill="#ece8d8"/><path d="M2 4.500h8v4.300h-8z" fill="#bdbbb0"/><path d="M.5 3.300h10" stroke="#8a8a86" stroke-width=".5"/></svg><span class="t" style="left:634.7px;top:212px;font-size:9.8px;letter-spacing:-0.002px;color:#ececec;">Apowersoft</span><span class="t" style="left:716.5px;top:212px;font-size:9.8px;letter-spacing:0.079px;color:#ececec;">11/30/2020</span>
<svg class="abs" style="left:621.3px;top:232.8px" width="10" height="9" viewBox="0 0 11 10"><path d="M.5 2.200c0-.8.400-1.200 1.200-1.200h2.600l1 1.300h4.200c.7 0 1 .3 1 1v5.500c0 .5-.3.800-.8.800h-8.400c-.5 0-.8-.3-.8-.8z" fill="#ece8d8"/><path d="M2 4.500h8v4.300h-8z" fill="#bdbbb0"/><path d="M.5 3.300h10" stroke="#8a8a86" stroke-width=".5"/></svg><span class="t" style="left:634.7px;top:230.3px;font-size:9.8px;letter-spacing:-0.147px;color:#ececec;">Camera R...</span><span class="t" style="left:716.5px;top:230.3px;font-size:9.8px;letter-spacing:0.045px;color:#ececec;">8/10/2020</span>
<svg class="abs" style="left:621.3px;top:250.9px" width="10" height="9" viewBox="0 0 11 10"><path d="M.5 2.200c0-.8.400-1.200 1.200-1.200h2.600l1 1.300h4.200c.7 0 1 .3 1 1v5.500c0 .5-.3.800-.8.800h-8.400c-.5 0-.8-.3-.8-.8z" fill="#ece8d8"/><path d="M2 4.500h8v4.300h-8z" fill="#bdbbb0"/><path d="M.5 3.300h10" stroke="#8a8a86" stroke-width=".5"/></svg><span class="t" style="left:634.7px;top:248.4px;font-size:9.8px;letter-spacing:-0.095px;color:#ececec;">DearMobi...</span><span class="t" style="left:716.5px;top:248.4px;font-size:9.8px;letter-spacing:0.045px;color:#ececec;">8/26/2020</span>
<svg class="abs" style="left:621.3px;top:269.1px" width="10" height="9" viewBox="0 0 11 10"><path d="M.5 2.200c0-.8.400-1.200 1.200-1.200h2.600l1 1.300h4.200c.7 0 1 .3 1 1v5.500c0 .5-.3.800-.8.800h-8.400c-.5 0-.8-.3-.8-.8z" fill="#ece8d8"/><path d="M2 4.500h8v4.300h-8z" fill="#bdbbb0"/><path d="M.5 3.300h10" stroke="#8a8a86" stroke-width=".5"/></svg><span class="t" style="left:634.7px;top:266.6px;font-size:9.8px;letter-spacing:-0.042px;color:#ececec;">Lightroom</span><span class="t" style="left:716.5px;top:266.6px;font-size:9.8px;letter-spacing:0.079px;color:#ececec;">11/24/2020</span>
<svg class="abs" style="left:621.3px;top:287.2px" width="10" height="9" viewBox="0 0 11 10"><path d="M.5 2.200c0-.8.400-1.200 1.200-1.200h2.600l1 1.300h4.200c.7 0 1 .3 1 1v5.500c0 .5-.3.800-.8.800h-8.400c-.5 0-.8-.3-.8-.8z" fill="#ece8d8"/><path d="M2 4.500h8v4.300h-8z" fill="#bdbbb0"/><path d="M.5 3.300h10" stroke="#8a8a86" stroke-width=".5"/></svg><span class="t" style="left:634.7px;top:284.7px;font-size:9.8px;letter-spacing:-0.434px;color:#ececec;">Picasa</span><span class="t" style="left:716.5px;top:284.7px;font-size:9.8px;letter-spacing:0.079px;color:#ececec;">11/16/2020</span>
<svg class="abs" style="left:621.3px;top:305.2px" width="10" height="9" viewBox="0 0 11 10"><path d="M.5 2.200c0-.8.400-1.200 1.200-1.200h2.600l1 1.300h4.200c.7 0 1 .3 1 1v5.500c0 .5-.3.800-.8.800h-8.400c-.5 0-.8-.3-.8-.8z" fill="#ece8d8"/><path d="M2 4.500h8v4.300h-8z" fill="#bdbbb0"/><path d="M.5 3.300h10" stroke="#8a8a86" stroke-width=".5"/></svg><span class="t" style="left:634.7px;top:302.7px;font-size:9.8px;letter-spacing:-0.223px;color:#ececec;">Saved Pic...</span><span class="t" style="left:716.5px;top:302.7px;font-size:9.8px;letter-spacing:0.045px;color:#ececec;">8/10/2020</span>
<svg class="abs" style="left:621.3px;top:323.3px" width="10" height="9" viewBox="0 0 11 10"><path d="M.5 2.200c0-.8.400-1.200 1.200-1.200h2.600l1 1.300h4.200c.7 0 1 .3 1 1v5.500c0 .5-.3.800-.8.800h-8.400c-.5 0-.8-.3-.8-.8z" fill="#ece8d8"/><path d="M2 4.500h8v4.300h-8z" fill="#bdbbb0"/><path d="M.5 3.300h10" stroke="#8a8a86" stroke-width=".5"/></svg><span class="t" style="left:634.7px;top:320.8px;font-size:9.8px;letter-spacing:-0.203px;color:#ececec;">VideoProc</span><span class="t" style="left:716.5px;top:320.8px;font-size:9.8px;letter-spacing:0.045px;color:#ececec;">8/14/2020</span>
<svg class="abs" style="left:621.3px;top:341.5px" width="10" height="9" viewBox="0 0 11 10"><path d="M.5 2.200c0-.8.400-1.200 1.200-1.200h2.600l1 1.300h4.200c.7 0 1 .3 1 1v5.500c0 .5-.3.800-.8.800h-8.400c-.5 0-.8-.3-.8-.8z" fill="#ece8d8"/><path d="M2 4.500h8v4.300h-8z" fill="#bdbbb0"/><path d="M.5 3.300h10" stroke="#8a8a86" stroke-width=".5"/></svg><span class="t" style="left:634.7px;top:339px;font-size:9.8px;letter-spacing:-0.111px;color:#ececec;">VideoWeb...</span><span class="t" style="left:716.5px;top:339px;font-size:9.8px;letter-spacing:0.005px;color:#ececec;">10/16/2020</span>

<!-- preview -->
<div class="abs" style="left:791px;top:174.500px;width:116.500px;height:211px;background:#323232"></div>
<div class="abs" style="left:791px;top:174.500px;width:116.500px;height:18px;background:#2e2e2e;border:1px solid #262626;border-radius:2px"></div>
<span class="t" style="left:794.3px;top:175.8px;font-size:9.8px;letter-spacing:-0.051px;color:#dcdcdc;">Preview</span>
<svg class="abs" style="left:822px;top:215px" width="54" height="54" viewBox="0 0 54 54"><circle cx="26.800" cy="27.200" r="21.400" fill="none" stroke="#cacaca" stroke-width="6"/><path d="M20.300 22.300c0-4 3-6.300 6.600-6.300s6.500 2.300 6.500 5.800c0 4.200-5.200 4.400-5.200 8.800" fill="none" stroke="#cacaca" stroke-width="5"/><circle cx="28" cy="37.800" r="2.900" fill="#cacaca"/></svg>
<span class="t" style="left:823px;top:293.5px;font-size:9.8px;letter-spacing:-0.060px;font-style:italic;color:#9a9a9a;">No selection</span>
<!-- options -->
<div class="chk" style="left:508px;top:397.300px"></div>
<span class="t" style="left:520.8px;top:394px;font-size:9.8px;letter-spacing:-0.070px;color:#ececec;">Show All Files</span>
<div class="chk" style="left:508px;top:415px;background:#1c1c1c"></div>
<svg class="abs" style="left:508px;top:415px" width="10" height="10" viewBox="0 0 10 10"><path d="M5 3v4M3 5h4" stroke="#fff" stroke-width="2.300" stroke-linecap="round"/></svg>
<span class="t" style="left:520.8px;top:412.5px;font-size:9.8px;letter-spacing:-0.015px;color:#ececec;">Select File Type (By Extension)</span>
<div class="chk" style="left:508px;top:432.300px"></div>
<span class="t" style="left:520.8px;top:428.8px;font-size:9.8px;letter-spacing:0.436px;font-weight:bold;color:#f0f0f0;">Save this XCF file with better but slower compression</span>
<div class="chk" style="left:508px;top:450.500px;background:#1c1c1c"></div>
<svg class="abs" style="left:508px;top:450.500px" width="10" height="10" viewBox="0 0 10 10"><path d="M5 3v4M3 5h4" stroke="#fff" stroke-width="2.300" stroke-linecap="round"/></svg>
<span class="t" style="left:520.8px;top:447.8px;font-size:9.8px;letter-spacing:0.001px;color:#ececec;">The image uses features from GIMP 2.10 and won't be readable by older GIMP versions.</span>
<div class="btn" style="left:512px;top:477.200px;width:63.500px;height:20.300px"></div>
<span class="t" style="left:533.3px;top:479.5px;font-size:9.8px;letter-spacing:0.086px;color:#ececec;">Help</span>
<div class="btn" style="left:770px;top:477.200px;width:63.800px;height:20.300px"></div>
<span class="t" style="left:790.8px;top:479.5px;font-size:9.8px;letter-spacing:-0.161px;color:#ececec;">Save</span>
<div class="btn" style="left:838.500px;top:477.200px;width:64px;height:20.300px"></div>
<span class="t" style="left:855.8px;top:479.5px;font-size:9.8px;letter-spacing:-0.300px;color:#ececec;">Cancel</span>
</div>
</body>
</html>
